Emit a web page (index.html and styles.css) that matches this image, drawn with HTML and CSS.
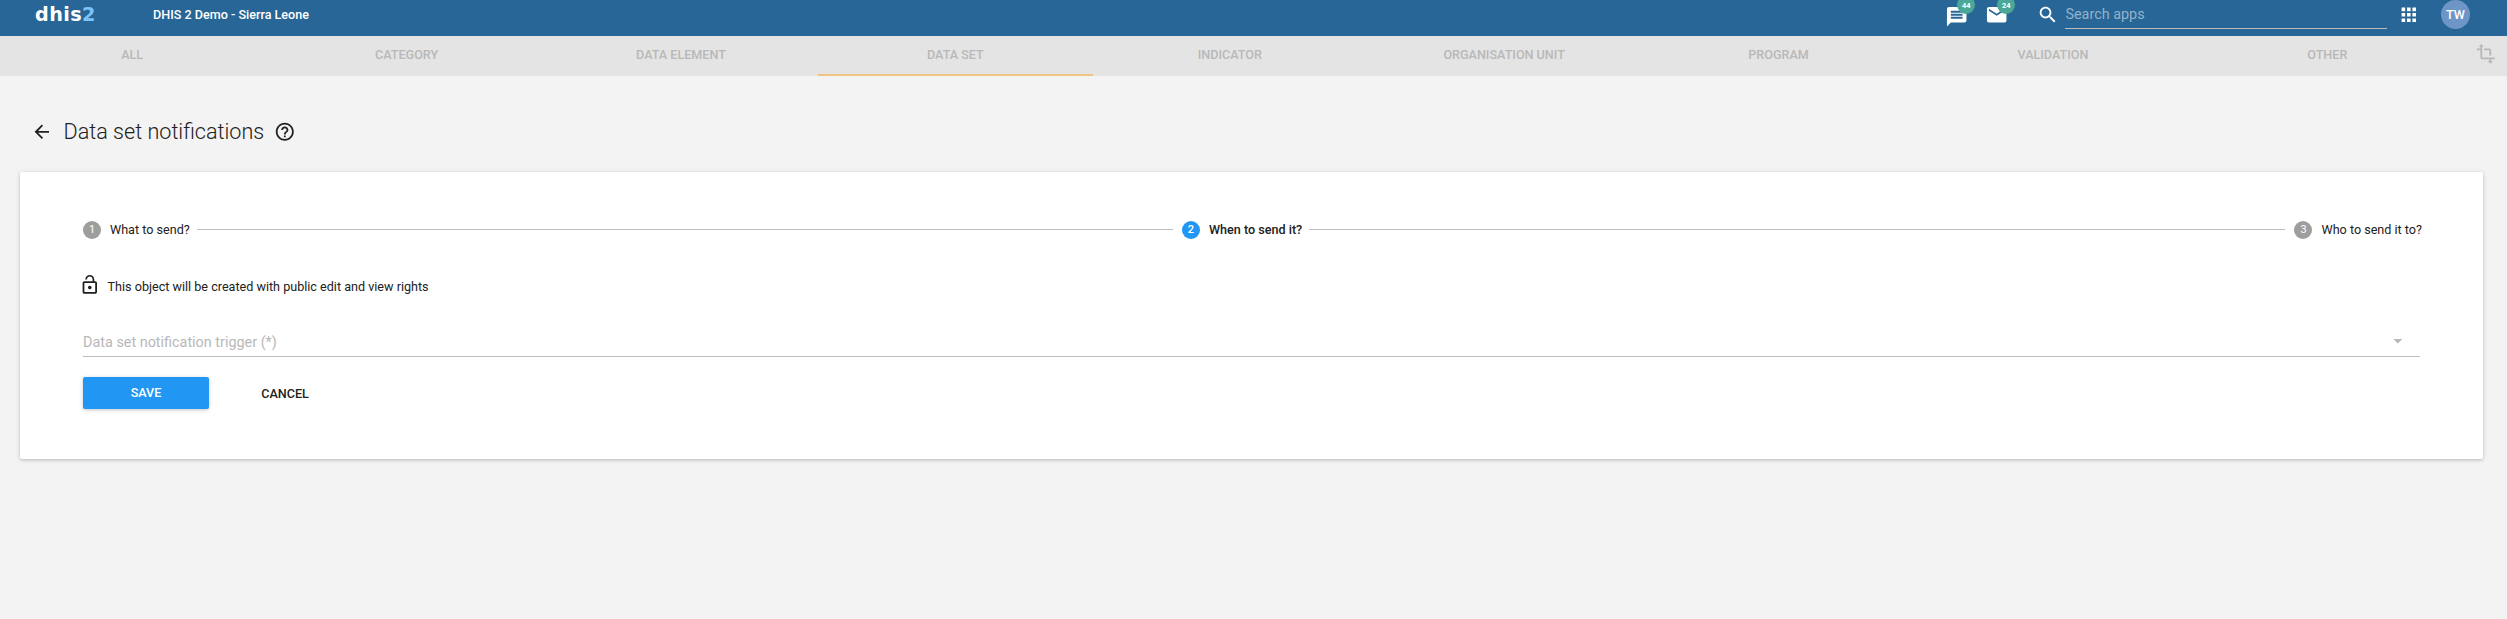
FILE: index.html
```
<!DOCTYPE html>
<html lang="en">
<head>
<meta charset="utf-8">
<title>Data set notifications</title>
<link rel="stylesheet" href="styles.css">
</head>
<body>
<header class="topbar">
  <div class="logo">dhis<span class="logo-two">2</span></div>
  <div class="site-name">DHIS 2 Demo - Sierra Leone</div>
  <div class="counter messages">
    <svg class="icon" viewBox="0 0 24 24"><path d="M20 2H4c-1.100 0-1.990.9-1.990 2L2 22l4-4h14c1.100 0 2-.9 2-2V4c0-1.100-.9-2-2-2zm-2 12H6v-2h12v2zm0-3H6V9h12v2zm0-3H6V6h12v2z"/></svg>
    <span class="badge">44</span>
  </div>
  <div class="counter mail">
    <svg class="icon" viewBox="0 0 24 24"><path d="M20 4H4c-1.100 0-1.990.9-1.990 2L2 18c0 1.100.9 2 2 2h16c1.100 0 2-.9 2-2V6c0-1.100-.9-2-2-2zm0 4l-8 5-8-5V6l8 5 8-5v2z"/></svg>
    <span class="badge">24</span>
  </div>
  <svg class="icon search-icon" viewBox="0 0 24 24"><path d="M15.500 14h-.79l-.28-.27C15.410 12.590 16 11.110 16 9.500 16 5.910 13.090 3 9.500 3S3 5.910 3 9.500 5.910 16 9.500 16c1.610 0 3.090-.59 4.230-1.570l.27.28v.79l5 4.990L20.490 19l-4.990-5zm-6 0C7.010 14 5 11.990 5 9.500S7.010 5 9.500 5 14 7.010 14 9.500 11.990 14 9.500 14z"/></svg>
  <div class="search">Search apps</div>
  <svg class="icon apps-icon" viewBox="0 0 24 24"><path d="M4 8h4V4H4v4zm6 12h4v-4h-4v4zm-6 0h4v-4H4v4zm0-6h4v-4H4v4zm6 0h4v-4h-4v4zm6-10v4h4V4h-4zm-6 4h4V4h-4v4zm6 6h4v-4h-4v4zm0 6h4v-4h-4v4z"/></svg>
  <div class="avatar">TW</div>
</header>

<nav class="tabs">
  <div class="tab">ALL</div>
  <div class="tab">CATEGORY</div>
  <div class="tab">DATA ELEMENT</div>
  <div class="tab active">DATA SET</div>
  <div class="tab">INDICATOR</div>
  <div class="tab">ORGANISATION UNIT</div>
  <div class="tab">PROGRAM</div>
  <div class="tab">VALIDATION</div>
  <div class="tab">OTHER</div>
  <svg class="icon crop-icon" viewBox="0 0 24 24"><path d="M22 18v-2H8V4h2L7 1 4 4h2v2H2v2h4v8c0 1.100.9 2 2 2h8v2h-2l3 3 3-3h-2v-2h4zM10 8h6v6h2V8c0-1.100-.9-2-2-2h-6v2z"/></svg>
</nav>

<main class="content">
  <div class="heading">
    <svg class="icon back-icon" viewBox="0 0 24 24"><path d="M20 11H7.830l5.590-5.590L12 4l-8 8 8 8 1.410-1.410L7.830 13H20v-2z"/></svg>
    <h1 class="title">Data set notifications</h1>
    <svg class="icon help-icon" viewBox="0 0 24 24"><path d="M11 18h2v-2h-2v2zm1-16C6.480 2 2 6.480 2 12s4.480 10 10 10 10-4.480 10-10S17.520 2 12 2zm0 18c-4.410 0-8-3.590-8-8s3.590-8 8-8 8 3.590 8 8-3.590 8-8 8zm0-14c-2.210 0-4 1.790-4 4h2c0-1.100.9-2 2-2s2 .9 2 2c0 2-3 1.750-3 5h2c0-2.250 3-2.500 3-5 0-2.210-1.790-4-4-4z"/></svg>
  </div>

  <section class="card">
    <div class="stepper">
      <div class="step"><span class="dot">1</span><span>What to send?</span></div>
      <div class="rule"></div>
      <div class="step current"><span class="dot">2</span><span>When to send it?</span></div>
      <div class="rule"></div>
      <div class="step"><span class="dot">3</span><span>Who to send it to?</span></div>
    </div>
    <div class="rights">
      <svg class="icon" viewBox="0 0 24 24"><path d="M12 17c1.100 0 2-.9 2-2s-.9-2-2-2-2 .9-2 2 .9 2 2 2zm6-9h-1V6c0-2.760-2.240-5-5-5S7 3.240 7 6h1.900c0-1.710 1.390-3.100 3.100-3.100 1.710 0 3.100 1.390 3.100 3.100v2H6c-1.100 0-2 .9-2 2v10c0 1.100.9 2 2 2h12c1.100 0 2-.9 2-2V10c0-1.100-.9-2-2-2zm0 12H6V10h12v10z"/></svg>
      <span>This object will be created with public edit and view rights</span>
    </div>
    <div class="select">
      <span>Data set notification trigger (*)</span>
      <svg class="icon" viewBox="0 0 24 24"><path d="M7 10l5 5 5-5z"/></svg>
    </div>
    <div class="actions">
      <button class="button save">SAVE</button>
      <button class="button cancel">CANCEL</button>
    </div>
  </section>
</main>
</body>
</html>
```
FILE: styles.css
```
* { box-sizing: border-box; }

body {
  margin: 0;
  height: 619px;
  overflow: hidden;
  background: #f3f3f3;
  color: #212121;
  font: 12.6px/18px Roboto, sans-serif;
}

.icon {
  display: block;
  flex: none;
  width: 21.6px;
  height: 21.6px;
  fill: currentColor;
}

.topbar {
  display: flex;
  align-items: flex-start;
  height: 36px;
  background: #276696;
  color: #fff;
}

.logo {
  width: 118px;
  margin-left: 35px;
  font: 700 19.2px/30px "DejaVu Sans", sans-serif;
  letter-spacing: 0.4px;
}
.logo-two { color: #7ac3fb; }

.site-name {
  flex: 1;
  padding-top: 6px;
  font-weight: 500;
}

.counter { position: relative; width: 40.5px; padding-top: 5px; }
.counter .icon { width: 23.4px; height: 23.4px; }
.mail { width: 51px; padding-top: 3px; }
.mail .icon { margin-left: -0.5px; }
.badge {
  position: absolute;
  top: -4px;
  left: 12px;
  width: 18px;
  height: 18px;
  border-radius: 50%;
  background: #4ba896;
  font-size: 7.5px;
  font-weight: 700;
  line-height: 19px;
  text-align: center;
}
.mail .badge { left: 11.5px; }

.search-icon { margin-top: 4px; }
.search {
  width: 322px;
  height: 29px;
  margin: 0 11px 0 7px;
  border-bottom: 1px solid #bdbdbd;
  color: #93b2ca;
  font-size: 14.4px;
  line-height: 29px;
}
.apps-icon { margin-top: 4px; }
.avatar {
  width: 29px;
  height: 29px;
  margin: 0 37px 0 21px;
  border-radius: 50%;
  background: #6d95c6;
  font-size: 12.6px;
  font-weight: 500;
  line-height: 30px;
  text-align: center;
}

.tabs {
  display: flex;
  height: 40px;
  background: #e4e4e4;
  color: #b8b8b8;
}
.tab {
  flex: none;
  width: 274.4px;
  padding-top: 10px;
  font-weight: 500;
  text-align: center;
}
.tab:first-child { margin-left: -5px; }
.active { border-bottom: 2px solid #f0c583; }
.crop-icon { margin: 7px 0 0 10.5px; }

.heading {
  display: flex;
  align-items: center;
  height: 96px;
  padding: 16px 0 0 31px;
}
.title {
  margin: 0 10px 0 11px;
  font-size: 21.6px;
  font-weight: 300;
  line-height: 30px;
}

.card {
  height: 287px;
  margin: 0 24px 0 20px;
  padding: 45px 63px 0;
  border-radius: 2px;
  background: #fff;
  box-shadow: 0 1px 5px rgba(0, 0, 0, 0.12), 0 1px 3px rgba(0, 0, 0, 0.14);
}

.stepper { display: flex; align-items: center; height: 26px; margin-right: -2px; }
.step { display: flex; align-items: center; gap: 9px; }
.dot {
  width: 18px;
  height: 18px;
  border-radius: 50%;
  background: #9e9e9e;
  color: #fff;
  font-size: 11px;
  line-height: 18px;
  text-align: center;
}
.current { font-weight: 500; }
.current .dot { background: #2196f3; }
.rule { flex: 1; height: 1px; margin: 0 9px 1px 7px; background: #bdbdbd; }

.rights {
  display: flex;
  align-items: center;
  gap: 7px;
  height: 22px;
  margin: 31px 0 0 -4px;
}
.rights span { padding-top: 3px; }

.select {
  display: flex;
  justify-content: space-between;
  align-items: center;
  height: 32px;
  margin-top: 29px;
  padding: 0 11px 0 0;
  border-bottom: 1px solid #bdbdbd;
  color: #b8b8b8;
  font-size: 14.4px;
}
.select span { padding-top: 5px; }

.actions { display: flex; margin-top: 20px; }
.button {
  height: 32px;
  padding: 0;
  border: 0;
  border-radius: 2px;
  background: none;
  color: #212121;
  font: 500 12.6px/32px Roboto, sans-serif;
}
.save {
  width: 126px;
  background: #2196f3;
  box-shadow: 0 1px 5px rgba(0, 0, 0, 0.12), 0 1px 3px rgba(0, 0, 0, 0.12);
  color: #fff;
}
.cancel { width: 80px; margin-left: 36px; padding-top: 1px; }
```
